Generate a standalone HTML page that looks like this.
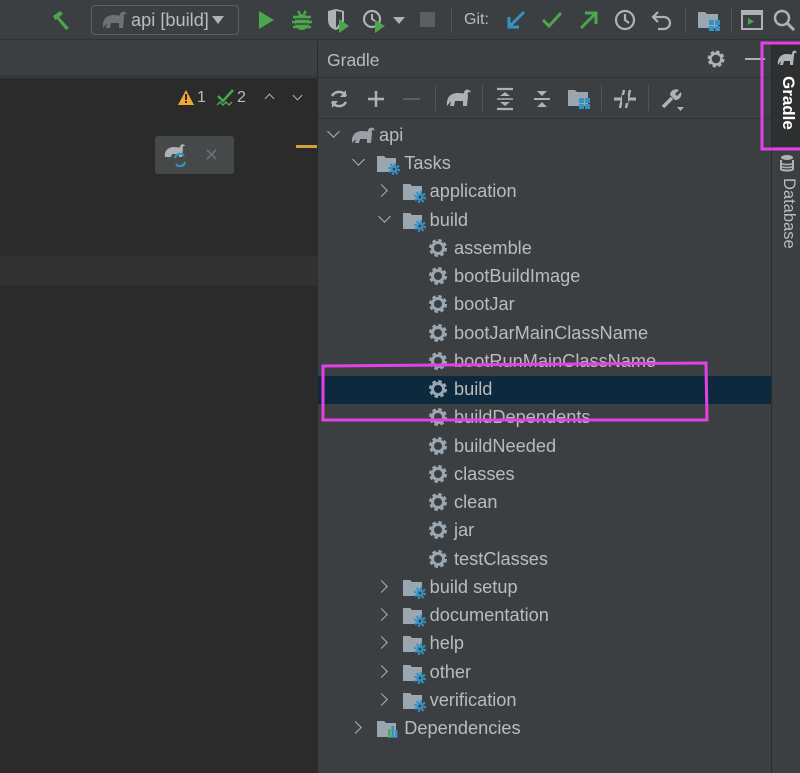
<!DOCTYPE html>
<html><head><meta charset="utf-8"><style>
*{margin:0;padding:0;box-sizing:border-box}
body{width:800px;height:773px;overflow:hidden;background:#3c3f41;font-family:"Liberation Sans",sans-serif;color:#bbbbbb;position:relative}
.a{position:absolute}
.t{position:absolute;font-size:18.2px;line-height:20px;white-space:nowrap;color:#bbbbbb}
.ch{position:absolute;width:9px;height:9px;border-right:1.6px solid #afb1b3;border-bottom:1.6px solid #afb1b3}
.r{transform:rotate(-45deg)}
.d{transform:rotate(45deg)}
</style></head><body>
<div class="a" style="left:0;top:0;width:800px;height:40px;background:#3c3f41;border-bottom:1px solid #323232"></div>
<svg class="a" style="top:8px;left:50px" width="26" height="24" viewBox="0 0 26 24"><path d="M3 8 L10 3 L13 6 L9 9 L19 20 L16 22 L7 11 L5 12Z" fill="#4ca64f"/></svg>
<div class="a" style="left:91px;top:5px;width:148px;height:30px;border:1.5px solid #5e6060;border-radius:4px"></div>
<svg class="a" style="left:102px;top:10px" width="26" height="20" viewBox="0 0 26 20"><path d="M1 18 C0 9 5 5 12 5 C16 5 17 6 18 5 C18 1 24 0 25 5 C23 3 21 4 22 8 L21 18 L17 18 L17 13 L9 13 L8 18 L4 18 L5 13Z" fill="#6e7072"/></svg>
<div class="t" style="left:131px;top:10px;color:#bbb">api [build]</div>
<div class="a" style="left:212px;top:16px;border-left:6px solid transparent;border-right:6px solid transparent;border-top:8px solid #afb1b3"></div>
<svg class="a" style="left:257px;top:10px" width="18" height="20"><path d="M2 1 L17 10 L2 19Z" fill="#4ca64f"/></svg>
<svg class="a" style="left:290px;top:8px" width="24" height="24" viewBox="0 0 24 24"><ellipse cx="12" cy="14" rx="7" ry="8" fill="#4ca64f"/><path d="M3 9h18M2 14h20M3 19h18M8 3l2 3M16 3l-2 3" stroke="#4ca64f" stroke-width="2.5"/><path d="M6 11h12M6 16h12" stroke="#3c3f41" stroke-width="1.5"/></svg>
<svg class="a" style="left:326px;top:8px" width="26" height="26"><path d="M2 3 L10 1 L18 3 L18 12 C18 18 13 21 10 22 C6 21 2 18 2 12Z" fill="#afb1b3"/><path d="M10 3 L16 4 L16 12 L10 20Z" fill="#3c3f41"/><path d="M13 11 L23 18 L13 25Z" fill="#4ca64f"/></svg>
<svg class="a" style="left:362px;top:8px" width="26" height="26"><circle cx="10" cy="11" r="8" fill="none" stroke="#afb1b3" stroke-width="2.2"/><path d="M10 6 V11 L13 13" stroke="#afb1b3" stroke-width="2" fill="none"/><path d="M13 12 L23 18 L13 25Z" fill="#4ca64f"/></svg>
<div class="a" style="left:393px;top:17px;border-left:6px solid transparent;border-right:6px solid transparent;border-top:7px solid #afb1b3"></div>
<div class="a" style="left:420px;top:12px;width:15px;height:15px;background:#5c5e60"></div>
<div class="a" style="left:451px;top:7px;width:1px;height:26px;background:#515658"></div>
<div class="t" style="left:464px;top:10px;font-size:16px">Git:</div>
<svg class="a" style="left:504px;top:8px" width="24" height="24"><path d="M20 4 L6 18 M5 9 V19 H15" stroke="#3592c4" stroke-width="3" fill="none"/></svg>
<svg class="a" style="left:540px;top:8px" width="24" height="24"><path d="M3 12 L9 18 L21 5" stroke="#4ca64f" stroke-width="3" fill="none"/></svg>
<svg class="a" style="left:577px;top:8px" width="24" height="24"><path d="M4 20 L18 6 M8 5 H19 V16" stroke="#4ca64f" stroke-width="3" fill="none"/></svg>
<svg class="a" style="left:613px;top:8px" width="24" height="24"><circle cx="12" cy="12" r="9" fill="none" stroke="#afb1b3" stroke-width="2.2"/><path d="M12 6 V12 L16 15" stroke="#afb1b3" stroke-width="2.2" fill="none"/></svg>
<svg class="a" style="left:650px;top:8px" width="24" height="24"><path d="M8 4 L3 9 L8 14 M3 9 H14 A6 6 0 0 1 14 21 H8" stroke="#afb1b3" stroke-width="2.2" fill="none"/></svg>
<div class="a" style="left:685px;top:7px;width:1px;height:26px;background:#515658"></div>
<svg class="a" style="left:697px;top:8px" width="26" height="24"><path d="M1 4 H8 L10 6 H21 V20 H1Z" fill="#9aa7b0"/><rect x="12" y="12" width="5" height="5" fill="#3592c4"/><rect x="18" y="12" width="5" height="5" fill="#3592c4"/><rect x="12" y="18" width="5" height="5" fill="#3592c4"/><rect x="18" y="18" width="5" height="5" fill="#3592c4"/></svg>
<div class="a" style="left:731px;top:7px;width:1px;height:26px;background:#515658"></div>
<svg class="a" style="left:740px;top:8px" width="24" height="24"><rect x="2" y="3" width="20" height="18" fill="none" stroke="#afb1b3" stroke-width="2"/><rect x="2" y="3" width="20" height="4" fill="#afb1b3"/><path d="M8 10 L14 13.5 L8 17Z" fill="#4ca64f"/></svg>
<svg class="a" style="left:772px;top:8px" width="24" height="24"><circle cx="10" cy="10" r="7" fill="none" stroke="#afb1b3" stroke-width="2.5"/><path d="M15 15 L22 22" stroke="#afb1b3" stroke-width="3"/></svg>

<div class="a" style="left:0;top:41px;width:317px;height:36px;background:#3c3f41;border-bottom:1px solid #323232"></div>
<div class="a" style="left:0;top:78px;width:317px;height:695px;background:#2b2b2b"></div>
<div class="a" style="left:0;top:256px;width:317px;height:30px;background:#323232"></div>
<svg class="a" style="left:177px;top:89px" width="18" height="17"><path d="M9 1 L17 16 H1Z" fill="#f0a732"/><rect x="8" y="5" width="2" height="6" fill="#2b2b2b"/><rect x="8" y="12" width="2" height="2" fill="#2b2b2b"/></svg>
<div class="t" style="left:197px;top:88px;font-size:16px">1</div>
<svg class="a" style="left:216px;top:88px" width="20" height="20"><path d="M2 8 L7 13 L17 2" stroke="#4ca64f" stroke-width="2.5" fill="none"/><path d="M1 17 L4 14 L7 17 L10 14 L13 17 L16 14" stroke="#4ca64f" stroke-width="1.5" fill="none"/></svg>
<div class="t" style="left:237px;top:88px;font-size:16px">2</div>
<div class="ch" style="left:266px;top:95px;transform:rotate(-135deg);width:7px;height:7px"></div>
<div class="ch" style="left:294px;top:92px;transform:rotate(45deg);width:7px;height:7px"></div>
<div class="a" style="left:155px;top:136px;width:79px;height:38px;background:#45494a;border-radius:3px"></div>
<svg class="a" style="left:164px;top:143px" width="26" height="24"><path d="M1 14 C0 7 5 4 10 4 C13 4 15 5 16 4 C16 1 20 0 21 3 C19 3 18 4 19 6 L18 14 L15 14 L15 11 L8 11 L7 14 L4 14Z" fill="#afb1b3"/><path d="M11 15 A5 5 0 0 1 20 13 M21 19 A5 5 0 0 1 12 21" stroke="#3592c4" stroke-width="2.2" fill="none"/></svg>
<div class="a" style="left:204px;top:150px;color:#6e7072;font-size:18px;line-height:10px">✕</div>
<div class="a" style="left:296px;top:145px;width:21px;height:3px;background:#d4a23a"></div>

<div class="a" style="left:317px;top:41px;width:1px;height:732px;background:#2b2b2b"></div>
<div class="a" style="left:318px;top:41px;width:454px;height:37px;border-bottom:1px solid #323232"></div>
<div class="t" style="left:327px;top:50px;font-size:17.5px">Gradle</div>
<svg class="a" style="left:706px;top:49px" width="20" height="20" viewBox="0 0 20 20"><circle cx="10" cy="10" r="6.5" fill="none" stroke="#afb1b3" stroke-width="4" stroke-dasharray="3 2.1"/><circle cx="10" cy="10" r="5.5" fill="none" stroke="#afb1b3" stroke-width="2.5"/></svg>
<div class="a" style="left:745px;top:58px;width:20px;height:2px;background:#afb1b3"></div>
<div class="a" style="left:318px;top:118px;width:454px;height:1px;background:#323232"></div>
<svg class="a" style="left:328px;top:88px" width="22" height="22"><path d="M18 8 A8 8 0 0 0 4 8 M4 14 A8 8 0 0 0 18 14" stroke="#afb1b3" stroke-width="2.5" fill="none"/><path d="M18 2 V9 H12Z M4 20 V13 H10Z" fill="#afb1b3"/></svg>
<svg class="a" style="left:366px;top:89px" width="20" height="20"><path d="M10 2 V18 M2 10 H18" stroke="#afb1b3" stroke-width="2.5"/></svg>
<div class="a" style="left:403px;top:98px;width:17px;height:2px;background:#5c5e60"></div>
<div class="a" style="left:435px;top:85px;width:1px;height:26px;background:#515658"></div>
<svg class="a" style="left:446px;top:87px" width="26" height="22"><path d="M1 19 C0 10 5 6 12 6 C16 6 17 7 18 6 C18 2 24 1 25 6 C23 4 21 5 22 9 L21 19 L17 19 L17 14 L9 14 L8 19 L4 19 L5 14Z" fill="#afb1b3"/></svg>
<div class="a" style="left:482px;top:85px;width:1px;height:26px;background:#515658"></div>
<svg class="a" style="left:494px;top:87px" width="22" height="24"><path d="M3 2 H19 M3 22 H19" stroke="#afb1b3" stroke-width="2.2"/><path d="M6 9 L11 5 L16 9Z M6 15 L11 19 L16 15Z" fill="#afb1b3"/><path d="M3 12 H19" stroke="#afb1b3" stroke-width="1.5"/></svg>
<svg class="a" style="left:531px;top:87px" width="22" height="24"><path d="M3 12 H19" stroke="#afb1b3" stroke-width="2"/><path d="M6 4 L11 9 L16 4Z M6 20 L11 15 L16 20Z" fill="#afb1b3"/></svg>
<svg class="a" style="left:567px;top:87px" width="26" height="24"><path d="M1 3 H8 L10 5 H21 V19 H1Z" fill="#9aa7b0"/><rect x="12" y="11" width="5" height="5" fill="#3592c4"/><rect x="18" y="11" width="5" height="5" fill="#3592c4"/><rect x="12" y="17" width="5" height="5" fill="#3592c4"/><rect x="18" y="17" width="5" height="5" fill="#3592c4"/></svg>
<div class="a" style="left:601px;top:85px;width:1px;height:26px;background:#515658"></div>
<svg class="a" style="left:613px;top:87px" width="24" height="24"><path d="M1 12 H23" stroke="#afb1b3" stroke-width="3"/><path d="M11 3 L7 21 M17 3 L13 21" stroke="#afb1b3" stroke-width="2.5"/><path d="M9 8 H15 V16 H9Z" fill="#3c3f41"/><path d="M1 12 H8 M16 12 H23" stroke="#afb1b3" stroke-width="3"/></svg>
<div class="a" style="left:648px;top:85px;width:1px;height:26px;background:#515658"></div>
<svg class="a" style="left:660px;top:87px" width="26" height="26"><path d="M3 20 L12 11" stroke="#afb1b3" stroke-width="3.5"/><path d="M10 8 A6 6 0 0 1 19 3 L15 7 L17 9 L21 5 A6 6 0 0 1 15 13Z" fill="#afb1b3"/><path d="M17 20 L24 20 L20.5 24Z" fill="#afb1b3"/></svg>

<div class="a" style="left:318px;top:376px;width:454px;height:28px;background:#0d293e"></div>

<div id="tree"></div>

<div class="a" style="left:771px;top:41px;width:1px;height:732px;background:#2b2b2b"></div>
<div class="a" style="left:772px;top:41px;width:28px;height:732px;background:#3c3f41"></div>
<div class="a" style="left:772px;top:41px;width:28px;height:106px;background:#2d2f30"></div>
<svg class="a" style="left:777px;top:49px" width="20" height="18"><path d="M1 16 C0 9 4 5 10 5 C13 5 14 6 15 5 C15 1 19 0 20 4 C18 3 17 4 17 7 L16 16 L13 16 L13 12 L7 12 L6 16 L3 16 L4 12Z" fill="#afb1b3"/></svg>
<div class="a" style="left:778px;top:76px;transform-origin:0 0;transform:rotate(90deg);"><div style="position:absolute;left:0;top:-20px;font-size:17px;font-weight:bold;color:#fff;white-space:nowrap">Gradle</div></div>
<svg class="a" style="left:779px;top:154px" width="16" height="18"><ellipse cx="8" cy="3.5" rx="6" ry="2.5" fill="#afb1b3"/><path d="M2 6 V15 C2 17 14 17 14 15 V6" fill="none" stroke="#afb1b3" stroke-width="2"/><path d="M2 9 C2 11 14 11 14 9 M2 12 C2 14 14 14 14 12" stroke="#afb1b3" stroke-width="1.5" fill="none"/></svg>
<div class="a" style="left:778px;top:178px;transform-origin:0 0;transform:rotate(90deg);"><div style="position:absolute;left:0;top:-20px;font-size:16.5px;color:#bbbbbb;white-space:nowrap">Database</div></div>

<svg class="a" style="left:0;top:0" width="800" height="773"><path d="M323 366 L706 363 L707 420 L323 420Z" fill="none" stroke="#e042e6" stroke-width="3"/><path d="M802 43 L762 43 L762 149 L802 149" fill="none" stroke="#e042e6" stroke-width="3"/></svg>

<script>
const rows=[
[0,'c-d','ele','api'],[1,'c-d','fold','Tasks'],[2,'c-r','fold','application'],[2,'c-d','fold','build'],
[3,'','gear','assemble'],[3,'','gear','bootBuildImage'],[3,'','gear','bootJar'],[3,'','gear','bootJarMainClassName'],
[3,'','gear','bootRunMainClassName'],[3,'','gear','build'],[3,'','gear','buildDependents'],[3,'','gear','buildNeeded'],
[3,'','gear','classes'],[3,'','gear','clean'],[3,'','gear','jar'],[3,'','gear','testClasses'],
[2,'c-r','fold','build setup'],[2,'c-r','fold','documentation'],[2,'c-r','fold','help'],[2,'c-r','fold','other'],[2,'c-r','fold','verification'],
[1,'c-r','dep','Dependencies']];
const icons={
ele:'<svg width="24" height="20"><path d="M1 18 C0 10 5 6 11 6 C15 6 16 7 17 6 C17 2 23 1 24 6 C22 4 20 5 21 9 L20 18 L16 18 L16 14 L9 14 L8 18 L4 18 L5 14Z" fill="#9aa0a6"/></svg>',
fold:'<svg width="26" height="22"><path d="M1 3 H8 L10 5 H20 V19 H1Z" fill="#9aa7b0"/><circle cx="18" cy="16" r="4.5" fill="none" stroke="#3592c4" stroke-width="3" stroke-dasharray="2 1.5"/><circle cx="18" cy="16" r="3.5" fill="#3592c4"/><circle cx="18" cy="16" r="1.3" fill="#3c3f41"/></svg>',
gear:'<svg width="20" height="20" viewBox="0 0 20 20"><circle cx="10" cy="10" r="7" fill="none" stroke="#9aa7b0" stroke-width="4" stroke-dasharray="3.2 2.3"/><circle cx="10" cy="10" r="5.5" fill="none" stroke="#9aa7b0" stroke-width="3"/></svg>',
dep:'<svg width="26" height="22"><path d="M1 3 H8 L10 5 H20 V19 H1Z" fill="#9aa7b0"/><rect x="12" y="11" width="2.5" height="9" fill="#4ca64f"/><rect x="15.5" y="8" width="2.5" height="12" fill="#3592c4"/><rect x="19" y="12" width="2.5" height="8" fill="#3592c4"/></svg>'};
let h='';
rows.forEach((r,i)=>{
 const cy=135+i*28.24, lv=r[0];
 const cx=333+lv*25.3;
 if(r[1]=='c-d') h+=`<div class="ch d" style="left:${cx-4}px;top:${cy-8}px"></div>`;
 if(r[1]=='c-r') h+=`<div class="ch r" style="left:${cx-7}px;top:${cy-5}px"></div>`;
 let ix=cx+18;
 if(r[2]=='gear') ix=428;
 h+=`<div class="a" style="left:${ix}px;top:${cy-10}px">${icons[r[2]]}</div>`;
 h+=`<div class="t" style="left:${r[2]=='gear'?454:cx+46}px;top:${cy-10}px">${r[3]}</div>`;
});
document.getElementById('tree').innerHTML=h;
</script>
</body></html>
